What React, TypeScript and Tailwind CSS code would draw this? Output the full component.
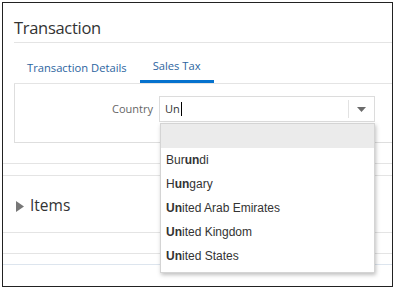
import { useState } from "react";

const countries = [
  { rest: "Bur", hit: "un", tail: "di" },
  { rest: "H", hit: "un", tail: "gary" },
  { rest: "", hit: "Un", tail: "ited Arab Emirates" },
  { rest: "", hit: "Un", tail: "ited Kingdom" },
  { rest: "", hit: "Un", tail: "ited States" },
];

const App = () => {
  const [query] = useState("Un");

  return (
    <div className="h-[289px] w-[395px] bg-white p-[2px] font-['Open_Sans',sans-serif]">
      <div className="relative flex h-[285px] flex-col overflow-hidden border-[1.5px] border-[#222]">
        {/* title */}
        <div className="ml-[11px] h-[40px] border-b border-[#e4e4e4] pt-[14px]">
          <h1 className="text-[16.5px] leading-[22px] tracking-[-0.3px] text-[#333]">Transaction</h1>
        </div>

        {/* tabs */}
        <div className="ml-[11px] flex h-[41px] border-b border-[#e4e4e4]">
          <button className="flex h-full items-center px-[13px] pt-[10px] text-[11.2px] text-[#2c64a0]">
            Transaction Details
          </button>
          <button className="flex h-full items-center border-b-[3px] border-[#0572ce] px-[13px] pt-[10px] text-[11.2px] text-[#2c64a0]">
            Sales Tax
          </button>
        </div>

        {/* sales tax panel */}
        <div className="ml-[11px] h-[59px] border-b border-l border-[#dedede] pt-[12px]">
          <div className="flex items-center">
            <label className="w-[138px] text-right text-[11px] text-[#666]">Country</label>
            <div className="relative ml-[6px] w-[216px]">
              <div className="flex h-[26px] items-center border border-[#dcdcdc] bg-white">
                <div className="flex flex-1 items-center pl-[5px] text-[11px] text-[#333]">
                  {query}
                  <span className="ml-[1px] h-[14px] w-[1px] bg-black" />
                </div>
                <div className="flex h-[18px] w-[26px] items-center justify-center border-l border-[#e2e2e2]">
                  <svg width="9" height="5" viewBox="0 0 9 5">
                    <path d="M0 0 H9 L4.5 5 Z" fill="#6b6b6b" />
                  </svg>
                </div>
              </div>

              {/* suggestions */}
              <ul className="absolute left-[1px] top-[27px] z-10 w-[215px] border border-[#d4d4d4] bg-white pb-[4px] shadow-[1px_2px_4px_rgba(0,0,0,0.25)] font-['Liberation_Sans',Arial,sans-serif]">
                <li className="h-[24px] bg-[#ebebeb]" />
                {countries.map((c) => (
                  <li key={c.hit + c.tail} className="flex h-[24px] items-center px-[5px] text-[12px] text-[#333]">
                    {c.rest}
                    <b className="font-bold">{c.hit}</b>
                    {c.tail}
                  </li>
                ))}
              </ul>
            </div>
          </div>
        </div>

        <div className="mt-[20px] h-[13px] border-y border-[#e4e4e4]" />

        {/* items */}
        <div className="flex h-[56px] items-center gap-[6px] pl-[13px] pt-[4px]">
          <svg width="8" height="11" viewBox="0 0 8 11">
            <path d="M0 0 L8 5.5 L0 11 Z" fill="#777" />
          </svg>
          <span className="text-[15.5px] text-[#333]">Items</span>
        </div>

        <div className="h-[21px] border-t border-[#e4e4e4]" />
        <div className="h-[11px] border-t border-[#e4e4e4]" />
        <div className="border-t border-[#dde5ee]" />
      </div>
    </div>
  );
};

export default App;
